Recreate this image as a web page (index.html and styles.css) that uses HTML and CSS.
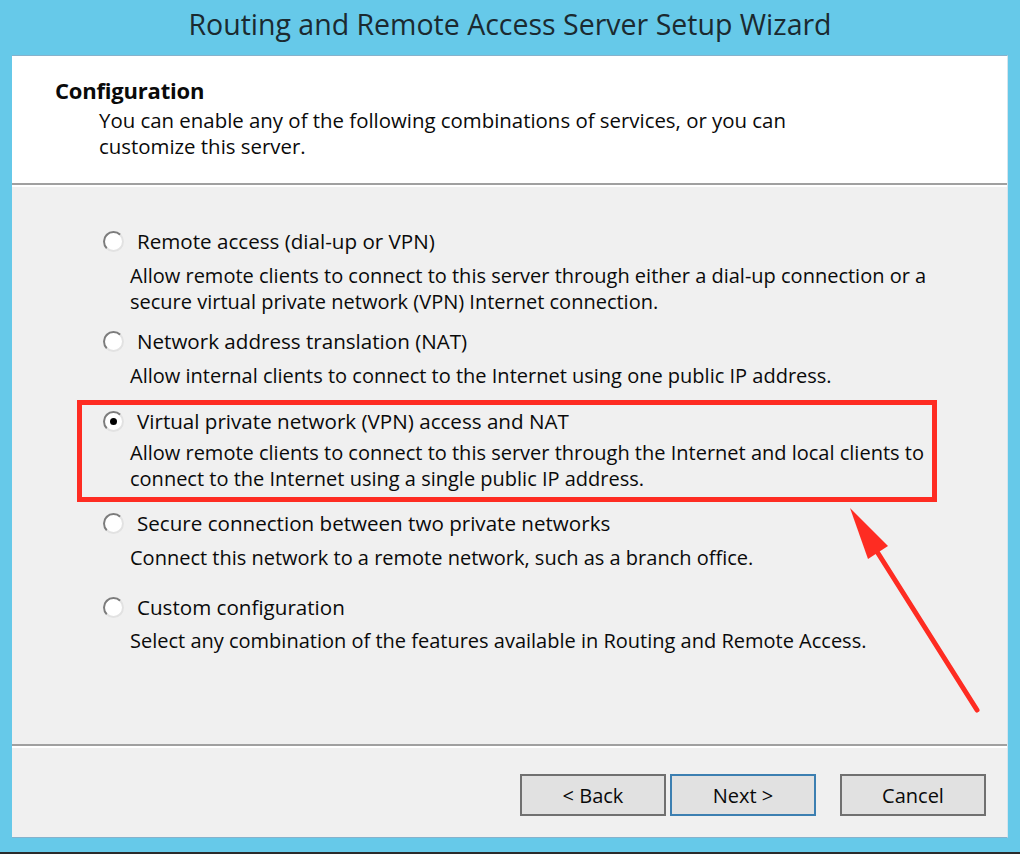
FILE: index.html
```html
<!DOCTYPE html>
<html>
    <head>
        <meta name="viewport" content="width=device-width, initial-scale=1" />
        <link rel="stylesheet" href="styles.css">
    </head>
    <body class="desktop">
        <div class="wizard">
            <div class="titlebar">Routing and Remote Access Server Setup Wizard</div>

            <div class="client">
                <div class="header">
                    <div class="heading">Configuration</div>
                    <div class="subtitle">You can enable any of the following combinations of services, or you can<br>customize this server.</div>
                </div>
                <div class="separator"></div>

                <div class="options">
                    <div class="option">
                        <div class="choice"><span class="radio"></span>Remote access (dial-up or VPN)</div>
                        <div class="desc">Allow remote clients to connect to this server through either a dial-up connection or a<br>secure virtual private network (VPN) Internet connection.</div>
                    </div>
                    <div class="option">
                        <div class="choice"><span class="radio"></span>Network address translation (NAT)</div>
                        <div class="desc">Allow internal clients to connect to the Internet using one public IP address.</div>
                    </div>
                    <div class="option marked">
                        <div class="choice"><span class="radio checked"></span>Virtual private network (VPN) access and NAT</div>
                        <div class="desc">Allow remote clients to connect to this server through the Internet and local clients to<br>connect to the Internet using a single public IP address.</div>
                    </div>
                    <div class="option after-mark">
                        <div class="choice"><span class="radio"></span>Secure connection between two private networks</div>
                        <div class="desc">Connect this network to a remote network, such as a branch office.</div>
                    </div>
                    <div class="option last">
                        <div class="choice"><span class="radio"></span>Custom configuration</div>
                        <div class="desc">Select any combination of the features available in Routing and Remote Access.</div>
                    </div>
                </div>

                <div class="separator"></div>
                <div class="buttons">
                    <button>&lt; Back</button>
                    <button class="default">Next &gt;</button>
                    <button class="cancel">Cancel</button>
                </div>
            </div>
            <div class="taskbar"></div>
        </div>

        <!-- annotation arrow pointing at the selected option -->
        <svg class="arrow" width="1020" height="854" viewBox="0 0 1020 854">
            <line x1="977" y1="710" x2="876" y2="550" stroke="#fe2c22" stroke-width="5" stroke-linecap="round"/>
            <polygon points="850,508 868,559 888,546" fill="#fe2c22"/>
        </svg>
    </body>
</html>
```

FILE: styles.css
```css
* {
    padding: 0;
    margin: 0;
    box-sizing: border-box;
}

:root {
    --frame: #66c9e9;
    --panel: #f0f0f0;
    --text: #0a0a0a;
    --mark: #fe2c22;
}

body.desktop {
    position: relative;
    width: 1020px;
    height: 854px;
    overflow: hidden;
    background: var(--frame);
    font-family: "Open Sans", "Noto Sans", sans-serif;
    font-size: 20px;
    color: var(--text);
}

.wizard {
    display: flex;
    flex-direction: column;
    height: 854px;
}

.titlebar {
    height: 55px;
    padding-top: 5px;
    text-align: center;
    font-size: 28.5px;
    color: #1b2a30;
}

.client {
    height: 783px;
    margin: 0 12px;
    background: var(--panel);
    border-top: 1px solid #86b2cc;
    border-bottom: 1px solid #86b2cc;
    border-right: 1px solid #d6e4ec;
    display: flex;
    flex-direction: column;
}

.header {
    height: 127px;
    background: white;
    padding: 21px 0 0 43px;
    line-height: 26px;
}
.heading {
    font-weight: bold;
    font-size: 22px;
    letter-spacing: -0.2px;
}
.subtitle {
    padding-left: 44px;
    margin-top: 4px;
    font-size: 20.4px;
}

.separator {
    height: 4px;
    flex-shrink: 0;
    border-top: 2px solid #a0a0a0;
    border-bottom: 2px solid white;
}

.options {
    flex-grow: 1;
    padding-top: 36px;
    margin-left: 65px;
    width: 860px;
    line-height: 26px;
}

.option {
    border: 5px solid transparent;
    padding: 0 0 0 21px;
    margin-top: 3px;
}
.option:first-child {
    margin-top: 0;
}
.option.marked {
    border-color: var(--mark);
    padding: 3px 0 5px 21px;
    margin-top: 6px;
}
.option.after-mark {
    margin-top: 3px;
}
.option.last {
    margin-top: 13px;
}

.choice {
    display: flex;
    align-items: center;
    font-size: 20.6px;
}
.desc {
    margin-top: 9px;
    padding-left: 27px;
}
.marked .desc {
    margin-top: 6px;
}
.last .desc {
    margin-top: 8px;
}

.radio {
    width: 21px;
    height: 21px;
    margin-right: 13px;
    border-radius: 50%;
    border: 2px solid;
    border-color: #7c7c7c #e2e2e2 #e2e2e2 #7c7c7c;
    background: white;
    display: flex;
    justify-content: center;
    align-items: center;
}
.radio.checked::after {
    content: "";
    width: 7px;
    height: 7px;
    border-radius: 50%;
    background: black;
}

.buttons {
    height: 89px;
    flex-shrink: 0;
    display: flex;
    justify-content: flex-end;
    padding: 26px 21px 0 0;
    gap: 4px;
}
button {
    width: 146px;
    height: 42px;
    background: #e1e1e1;
    border: 2px solid #707070;
    font-family: inherit;
    font-size: 20px;
    color: var(--text);
}
button.default {
    border-color: #3c7fb1;
}
button.cancel {
    margin-left: 20px;
}

.taskbar {
    margin-top: 14px;
    height: 2px;
    background: #2b2b2b;
}

svg.arrow {
    position: absolute;
    top: 0;
    left: 0;
    pointer-events: none;
}
```
